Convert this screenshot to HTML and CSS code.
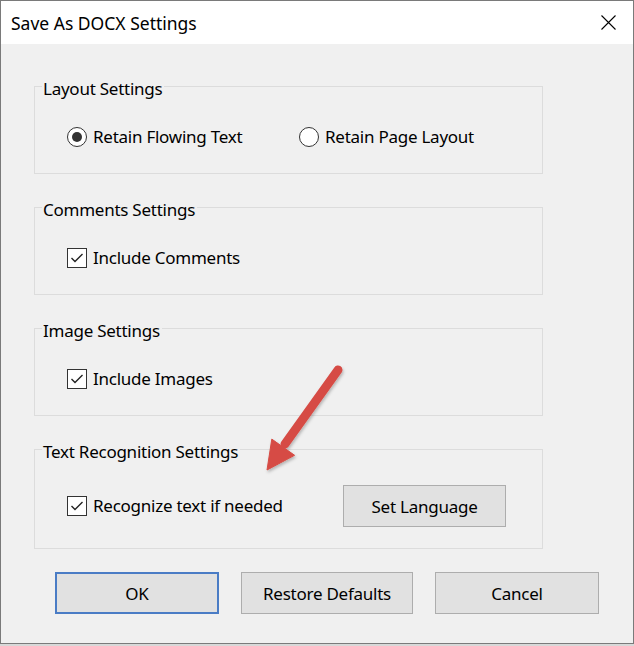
FILE: index.html
```html
<!DOCTYPE html>
<html lang="en">
<head>
    <meta charset="UTF-8">
    <meta name="viewport" content="width=device-width, initial-scale=1.0">
    <title>Save As DOCX Settings</title>
    <link rel="stylesheet" href="styles.css">
</head>
<body>
    <div class="window">
        <div class="titlebar">
            <span class="title">Save As DOCX Settings</span>
            <svg class="close" width="15" height="15" viewBox="0 0 15 15">
                <path d="M0.5 0.5 L14.5 14.5 M14.5 0.5 L0.5 14.5" stroke="#000" stroke-width="1.1" fill="none"/>
            </svg>
        </div>

        <div class="content">
            <div class="group">
                <div class="group-title">Layout Settings</div>
                <div class="row layout-row">
                    <label class="option">
                        <span class="radio checked"></span>
                        <span>Retain Flowing Text</span>
                    </label>
                    <label class="option">
                        <span class="radio"></span>
                        <span>Retain Page Layout</span>
                    </label>
                </div>
            </div>

            <div class="group">
                <div class="group-title">Comments Settings</div>
                <div class="row">
                    <label class="option">
                        <span class="checkbox"><svg width="18" height="18" viewBox="0 0 18 18"><path d="M3.5 9 L7 12.5 L14.5 5" stroke="#222" stroke-width="1.4" fill="none"/></svg></span>
                        <span>Include Comments</span>
                    </label>
                </div>
            </div>

            <div class="group">
                <div class="group-title">Image Settings</div>
                <div class="row">
                    <label class="option">
                        <span class="checkbox"><svg width="18" height="18" viewBox="0 0 18 18"><path d="M3.5 9 L7 12.5 L14.5 5" stroke="#222" stroke-width="1.4" fill="none"/></svg></span>
                        <span>Include Images</span>
                    </label>
                </div>
            </div>

            <div class="group group-ocr">
                <div class="group-title">Text Recognition Settings</div>
                <div class="row ocr-row">
                    <label class="option">
                        <span class="checkbox"><svg width="18" height="18" viewBox="0 0 18 18"><path d="M3.5 9 L7 12.5 L14.5 5" stroke="#222" stroke-width="1.4" fill="none"/></svg></span>
                        <span>Recognize text if needed</span>
                    </label>
                    <button class="btn btn-lang">Set Language</button>
                </div>
            </div>

            <div class="actions">
                <button class="btn btn-ok">OK</button>
                <button class="btn btn-restore">Restore Defaults</button>
                <button class="btn">Cancel</button>
            </div>
        </div>

        <!-- 설명용 빨간 화살표 -->
        <svg class="arrow" width="100" height="120" viewBox="0 0 100 120">
            <defs>
                <filter id="shadow" x="-20%" y="-20%" width="140%" height="140%">
                    <feDropShadow dx="1" dy="2" stdDeviation="1.5" flood-color="#000" flood-opacity="0.25"/>
                </filter>
            </defs>
            <g filter="url(#shadow)" fill="#d64c45" stroke="#d64c45">
                <line x1="88" y1="10" x2="35" y2="84" stroke-width="9" stroke-linecap="round"/>
                <polygon points="17,110 21.8,79.1 44.6,95.3" stroke-width="1" stroke-linejoin="round"/>
            </g>
        </svg>
    </div>
</body>
</html>
```

FILE: styles.css
```css
*{margin: 0; padding: 0; box-sizing: border-box;}

body{
    background-color: #d8d8d8;
    font-family: "Noto Sans", "Liberation Sans", sans-serif;
    font-size: 17px;
    color: #000;
}

.window{
    width: 634px;
    height: 644px;
    border: 1px solid #7a7a7a;
    background-color: #f0f0f0;
    position: relative;
    display: flex;
    flex-direction: column;
}

.titlebar{
    height: 43px;
    background-color: #fff;
    display: flex;
    align-items: center;
    justify-content: space-between;
    padding: 0 17px 0 10px;
    line-height: 24px;
}

.title{
    font-size: 17.5px;
}

.content{
    flex: 1;
    padding: 42px 0 0 33px;
    letter-spacing: -0.25px;
}

.group{
    width: 509px;
    border: 1px solid #dcdcdc;
    padding: 0 0 24px 32px;
    margin-bottom: 33px;
}

.group-title{
    width: fit-content;
    margin: -10px 0 0 -25px;
    padding: 0 2px 0 1px;
    line-height: 24px;
    background-color: #f0f0f0;
}

.row{
    margin-top: 24px;
    line-height: 24px;
    display: flex;
    align-items: center;
}

.layout-row{
    display: grid;
    grid-template-columns: 232px auto;
}

.option{
    display: flex;
    align-items: center;
    gap: 6px;
}

.radio{
    width: 20px;
    height: 20px;
    border: 1px solid #333;
    border-radius: 50%;
    background-color: #fff;
    display: flex;
    align-items: center;
    justify-content: center;
}

.radio.checked::after{
    content: "";
    width: 10px;
    height: 10px;
    border-radius: 50%;
    background-color: #333;
}

.checkbox{
    width: 20px;
    height: 20px;
    border: 1px solid #333;
    background-color: #fff;
    display: flex;
}

.group-ocr{
    padding-bottom: 21px;
    margin-bottom: 23px;
}

.ocr-row{
    margin-top: 21px;
    display: grid;
    grid-template-columns: 276px auto;
    align-items: center;
}

.btn{
    height: 42px;
    width: 164px;
    font-family: inherit;
    font-size: 17px;
    letter-spacing: -0.25px;
    color: #000;
    background-color: #e1e1e1;
    border: 1px solid #adadad;
}

.btn-lang{
    width: 163px;
}

.actions{
    display: flex;
    gap: 22px;
    padding-left: 21px;
}

.btn-ok{
    border: 2px solid #4a7cc5;
}

.btn-restore{
    width: 172px;
}

.arrow{
    position: absolute;
    left: 249px;
    top: 359px;
    pointer-events: none;
}
```
